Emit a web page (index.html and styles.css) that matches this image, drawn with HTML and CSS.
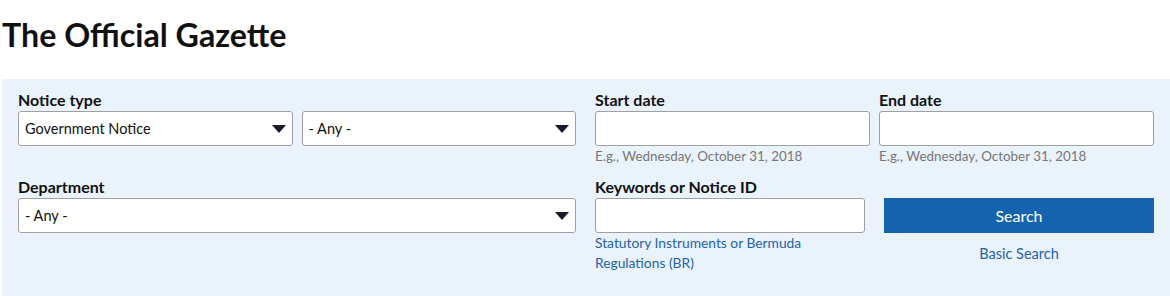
FILE: index.html
```html
<!DOCTYPE html>
<html lang="en">
<head>
    <meta charset="UTF-8">
    <title>The Official Gazette</title>
    <link rel="stylesheet" href="styles.css">
</head>
<body>
    <h1 class="page-title">The Official Gazette</h1>

    <form class="search-panel" id="gazette-search">
        <div class="row">
            <div class="half left">
                <label class="field-label" for="notice-type">Notice type</label>
                <div class="pair">
                    <div class="select-wrap">
                        <select id="notice-type" name="notice_type">
                            <option selected>Government Notice</option>
                            <option>Public Notice</option>
                        </select>
                    </div>
                    <div class="select-wrap">
                        <select name="notice_subtype">
                            <option selected>- Any -</option>
                        </select>
                    </div>
                </div>
            </div>
            <div class="half pair">
                <div class="field">
                    <label class="field-label" for="start-date">Start date</label>
                    <input type="text" id="start-date" name="start_date">
                    <div class="hint">E.g., Wednesday, October 31, 2018</div>
                </div>
                <div class="field">
                    <label class="field-label" for="end-date">End date</label>
                    <input type="text" id="end-date" name="end_date">
                    <div class="hint">E.g., Wednesday, October 31, 2018</div>
                </div>
            </div>
        </div>

        <div class="row">
            <div class="half left">
                <label class="field-label" for="department">Department</label>
                <div class="select-wrap">
                    <select id="department" name="department">
                        <option selected>- Any -</option>
                    </select>
                </div>
            </div>
            <div class="half pair wide-gap">
                <div class="field">
                    <label class="field-label" for="keywords">Keywords or Notice ID</label>
                    <input type="text" id="keywords" name="keywords">
                    <a class="link-small" href="#">Statutory Instruments or Bermuda Regulations (BR)</a>
                </div>
                <div class="actions">
                    <button type="submit">Search</button>
                    <a class="link-small" href="#">Basic Search</a>
                </div>
            </div>
        </div>
    </form>
</body>
</html>
```

FILE: styles.css
```css
* {
    box-sizing: border-box;
}

body {
    font-family: Lato, "Open Sans", Arial, sans-serif;
    margin: 0;
    padding: 0 0 0 2px;
    color: #111;
    background: #fff;
}

.page-title {
    font-size: 32.2px;
    font-weight: bold;
    margin: 0;
    padding: 15px 0 24px;
    line-height: 40px;
    color: #111;
}

.search-panel {
    background-color: #eaf2fb;
    padding: 9px 16px 23px;
}

.row {
    display: flex;
    gap: 19px;
}

.row + .row {
    margin-top: 9px;
}

.half {
    flex: 1;
}

.half.left {
    flex: 0 0 558px;
}

.pair {
    display: grid;
    grid-template-columns: 1fr 1fr;
    gap: 9px;
}

.pair.wide-gap {
    gap: 19px;
}

.field-label {
    display: block;
    font-size: 16px;
    font-weight: bold;
    line-height: 23px;
    color: #111;
}

input, select {
    display: block;
    width: 100%;
    height: 35px;
    font-family: inherit;
    font-size: 14.5px;
    color: #111;
    background: #fff;
    border: 1px solid #a0a0a0;
    border-radius: 3px;
}

input {
    padding: 0 8px;
}

.select-wrap {
    position: relative;
}

select {
    appearance: none;
    -webkit-appearance: none;
    padding: 0 36px 0 6px;
}

.select-wrap::after {
    content: "";
    position: absolute;
    right: 7px;
    top: 14px;
    border-left: 7px solid transparent;
    border-right: 7px solid transparent;
    border-top: 8px solid #1a1a2a;
    pointer-events: none;
}

.hint {
    font-size: 13.4px;
    line-height: 20px;
    color: #777;
}

.link-small {
    display: block;
    font-size: 13.8px;
    line-height: 20px;
    color: #2562ad;
    text-decoration: none;
    padding-right: 50px;
}

.actions {
    padding-top: 23px;
    text-align: center;
}

.actions .link-small {
    font-size: 14.5px;
    padding: 0;
    margin-top: 11px;
}

button {
    display: block;
    width: 100%;
    height: 35px;
    background-color: #1563af;
    color: #fff;
    border: none;
    font-family: inherit;
    font-size: 16px;
    cursor: pointer;
}

button:hover {
    background-color: #0f4f8e;
}
```
